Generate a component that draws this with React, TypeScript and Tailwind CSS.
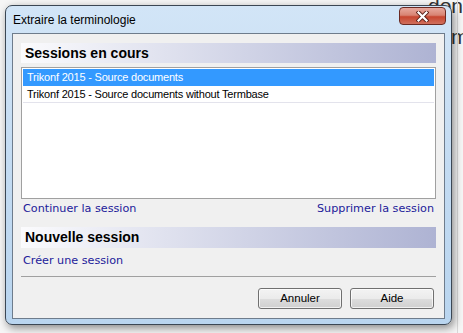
import React from 'react';

const sessions = [
  'Trikonf 2015 - Source documents',
  'Trikonf 2015 - Source documents without Termbase',
];

const SectionBand: React.FC<{ title: string; className?: string }> = ({ title, className }) => (
  <div
    className={`flex items-center pl-[4px] bg-gradient-to-r from-[#fbfbfd] to-[#aeb3d3] font-['Liberation_Sans',Arial,sans-serif] font-bold text-[14px] text-black ${className ?? ''}`}
  >
    {title}
  </div>
);

const WinButton: React.FC<{ label: string }> = ({ label }) => (
  <button className="w-[84px] h-[21px] rounded-[3px] border border-[#707070] bg-[linear-gradient(to_bottom,#f3f3f3_0%,#ebebeb_50%,#dddddd_51%,#d0d0d0_100%)] shadow-[inset_0_0_0_1px_rgba(255,255,255,0.7)] font-['Liberation_Sans',Arial,sans-serif] text-[11.5px] text-black leading-none">
    {label}
  </button>
);

export default function App() {
  const [selected, setSelected] = React.useState(0);

  return (
    <div className="relative w-[463px] h-[333px] overflow-hidden bg-[#f6f6f6]">
      {/* desktop content behind the dialog */}
      <span className="absolute left-[428px] top-[-10px] font-['Liberation_Sans',Arial,sans-serif] text-[21px] text-[#333]">don</span>
      <span className="absolute left-[451px] top-[21px] font-['Liberation_Sans',Arial,sans-serif] text-[21px] text-[#333]">m</span>
      <div className="absolute left-[457px] top-[0px] w-px h-[333px] bg-[#d8d8d8]" />

      <div className="relative z-10 ml-[5px] mt-[5px] w-[447px] h-[320px] rounded-[7px] border border-[#3b4754] bg-gradient-to-b from-[#d2e5f7] via-[#c3dbf2] to-[#b9d5ef] px-[6px] shadow-[2px_3px_8px_rgba(0,0,0,0.45)]">
        {/* title bar */}
        <div className="h-[27px] flex items-center pl-[1px] font-['Liberation_Sans',Arial,sans-serif] text-[12px] text-black">
          Extraire la terminologie
        </div>
        <button className="absolute top-[1px] right-[5px] w-[47px] h-[18px] rounded-[4px] border border-[#6b2a22] bg-[linear-gradient(to_bottom,#e8a99e_0%,#d88372_45%,#c7452f_55%,#d0705d_100%)] flex items-center justify-center">
          <svg width="13" height="11" viewBox="0 0 13 11">
            <path d="M2.5 1.5 L10.5 9.5 M10.5 1.5 L2.5 9.5" stroke="#5a1f18" strokeWidth="4" strokeLinecap="square" />
            <path d="M2.5 1.5 L10.5 9.5 M10.5 1.5 L2.5 9.5" stroke="#ffffff" strokeWidth="2.2" strokeLinecap="square" />
          </svg>
        </button>

        {/* client area */}
        <div className="h-[286px] border border-[#6e7c8c] bg-[#f0f0f0] px-[8px] flex flex-col">
          <SectionBand title="Sessions en cours" className="mt-[9px] h-[20px]" />

          <div className="mt-[4px] h-[132px] border border-[#a0a0a0] bg-white p-[1px]">
            {sessions.map((s, i) => (
              <div
                key={s}
                onClick={() => setSelected(i)}
                className={`h-[17px] flex items-center pl-[4px] font-['Liberation_Sans',Arial,sans-serif] text-[11px] tracking-[-0.2px] border-b ${
                  selected === i ? 'bg-[#3399ff] text-white border-[#3399ff]' : 'text-black border-[#e3e3ec]'
                }`}
              >
                {s}
              </div>
            ))}
          </div>

          <div className="mt-[3px] h-[14px] flex justify-between px-[2px] font-['DejaVu_Sans',Verdana,sans-serif] text-[11.2px] leading-[14px] text-[#22209a]">
            <span>Continuer la session</span>
            <span>Supprimer la session</span>
          </div>

          <SectionBand title="Nouvelle session" className="mt-[11px] h-[21px]" />

          <div className="mt-[6px] h-[14px] px-[2px] font-['DejaVu_Sans',Verdana,sans-serif] text-[11.2px] leading-[14px] text-[#22209a]">
            Créer une session
          </div>

          <div className="mt-[8px] h-px bg-[#a0a0a0]" />

          <div className="mt-[11px] flex justify-end gap-[8px] pr-[2px]">
            <WinButton label="Annuler" />
            <WinButton label="Aide" />
          </div>
        </div>
      </div>
    </div>
  );
}
